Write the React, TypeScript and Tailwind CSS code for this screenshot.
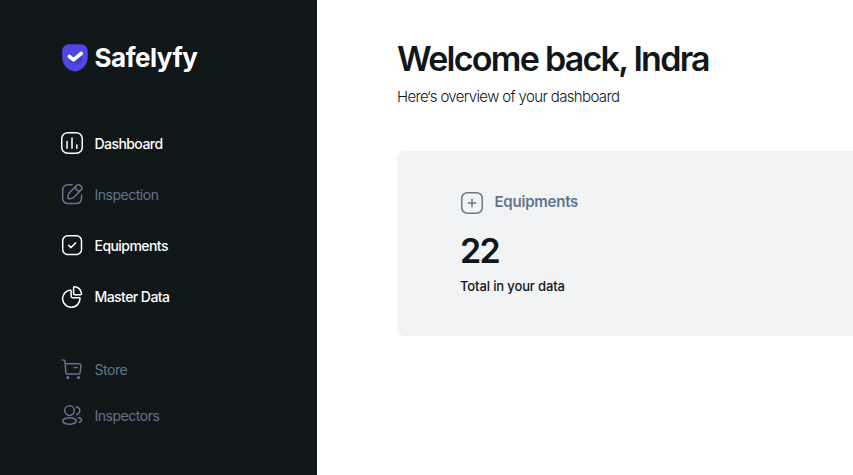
import type { ReactNode } from "react";

function Icon({ children, width = 1.5 }: { children: ReactNode; width?: number }) {
  return (
    <svg width="24" height="24" viewBox="0 0 24 24" fill="none" stroke="currentColor" strokeWidth={width} strokeLinecap="round" strokeLinejoin="round" className="shrink-0">
      {children}
    </svg>
  );
}

const icons = {
  dashboard: (
    <Icon>
      <rect x="1.75" y="1.75" width="20.5" height="20.5" rx="5.8" />
      <path d="M7 10.5v6.7M12 7v10.2M16.8 14v3.2" />
    </Icon>
  ),
  edit: (
    <Icon>
      <path d="M12 2.7H8.5c-4.2 0-5.8 1.7-5.8 5.8v7.2c0 4.1 1.7 5.8 5.8 5.8h7.2c4.1 0 5.8-1.7 5.8-5.8V13" />
      <path d="m16.2 3.9-7.3 7.3c-.3.3-.5.8-.6 1.2l-.4 2.8c-.1 1 .5 1.6 1.5 1.5l2.8-.4c.4-.1.9-.3 1.2-.6l7.3-7.3c1.3-1.3 1.8-2.7 0-4.5s-3.2-1.3-4.5 0ZM15.1 5c.6 2.2 2.3 3.9 4.5 4.5" />
    </Icon>
  ),
  check: (
    <Icon>
      <rect x="2.7" y="2.7" width="18.8" height="18.8" rx="5" />
      <path d="m8.6 12.3 2.4 2.3 4.6-4.7" />
    </Icon>
  ),
  pie: (
    <Icon>
      <path d="M21.5 9.2c-.6-3.3-3.2-5.9-6.5-6.5-.9-.2-1.4.3-1.4 1.1v5.6c0 .8.5 1.3 1.3 1.3h5.4c.8 0 1.3-.6 1.2-1.5Z" />
      <path d="M20 14.6a8.7 8.7 0 1 1-9.9-8.6c.6-.1 1 .3 1 1v5.3c0 .8.6 1.4 1.4 1.4h6.9c.5 0 .7.3.6.9Z" />
    </Icon>
  ),
  cart: (
    <Icon>
      <path d="M2.5 3h1c.8 0 1.4.6 1.5 1.4l.8 10.7c.1 1.2 1 2 2.1 2h10.3c1.1 0 1.9-.8 2-1.9l.7-6.5c.1-1.1-.7-2-1.8-2H5.2M14.2 10.6h3" />
      <circle cx="7.8" cy="20.6" r=".8" fill="currentColor" />
      <circle cx="18.5" cy="20.6" r=".8" fill="currentColor" />
    </Icon>
  ),
  users: (
    <Icon>
      <circle cx="9.5" cy="7.6" r="4.8" />
      <ellipse cx="9.5" cy="18" rx="6.8" ry="3.2" />
      <path d="M16.2 3.7c4.7.8 4.7 6.8.3 7.7M18.3 14.8c4 .2 4.2 3.8.8 4.4" />
    </Icon>
  ),
};

function NavItem({ icon, label, muted = false }: { icon: ReactNode; label: string; muted?: boolean }) {
  return (
    <a className={muted ? "flex h-6 items-center gap-[10.5px] tracking-[-0.03em] text-[#64748b]" : "flex h-6 items-center gap-[10.5px] font-medium tracking-[-0.035em] text-white"}>
      {icon}
      <span className="relative top-px text-[14px] leading-6 whitespace-nowrap">{label}</span>
    </a>
  );
}

export default function App() {
  return (
    <div className="flex h-[475px] w-full overflow-hidden bg-white font-['Inter',sans-serif] text-[#101719]">
      <aside className="w-[317px] shrink-0 bg-[#101719] pl-[60px] pt-[42px]">
        <div className="flex h-8 items-center text-white">
          <svg width="30" height="32" viewBox="0 0 30 32" fill="none">
            <defs>
              <linearGradient id="shadow" x1="15" y1="17" x2="15" y2="26" gradientUnits="userSpaceOnUse">
                <stop stopColor="#4036bd" />
                <stop offset="1" stopColor="#4f46e5" />
              </linearGradient>
            </defs>
            <path d="M10 2.2h10c5 0 7.8 2.6 7.8 7.4v4.2c0 4.6-1 8-3.3 10.8-2.6 3.2-5.9 4.8-9.5 4.8s-6.9-1.6-9.5-4.8C3.2 21.8 2.2 18.4 2.2 13.8V9.6c0-4.8 2.8-7.4 7.8-7.4Z" fill="#4f46e5" />
            <path d="m9 16 5 3.5 8-7v5.5c-1 5-12 8-13-2Z" fill="url(#shadow)" />
            <path d="m9.4 14.5 4.1 3.4 7.7-6.4" stroke="white" strokeWidth="3.6" strokeLinecap="round" strokeLinejoin="round" />
          </svg>
          <span className="ml-[4.5px] text-[26px] leading-8 font-bold tracking-[-0.018em]">Safelyfy</span>
        </div>
        <nav className="mt-[57px]">
          <div className="flex flex-col gap-[27px]">
            <NavItem icon={icons.dashboard} label="Dashboard" />
            <NavItem icon={icons.edit} label="Inspection" muted />
            <NavItem icon={icons.check} label="Equipments" />
            <NavItem icon={icons.pie} label="Master Data" />
          </div>
          <div className="mt-[49px] flex flex-col gap-[22px]">
            <NavItem icon={icons.cart} label="Store" muted />
            <NavItem icon={icons.users} label="Inspectors" muted />
          </div>
        </nav>
      </aside>
      <main className="flex-1 pl-20 pt-[37px]">
        <h1 className="text-[34px] leading-[44px] font-semibold tracking-[-0.051em] whitespace-nowrap">Welcome back, Indra</h1>
        <p className="mt-1 text-[15px] leading-6 font-light tracking-[-0.043em]">Here‘s overview of your dashboard</p>
        <section className="mt-[42px] h-[185px] rounded-l-lg bg-[#f1f3f5] pl-[63px] pt-10">
          <div className="flex h-6 items-center gap-[10.5px] text-[#64748b]">
            <span className="text-[#707784]">
              <Icon>
                <rect x="1.75" y="1.75" width="20.5" height="20.5" rx="5.5" />
                <path d="M8.3 12h7.4M12 8.3v7.4" />
              </Icon>
            </span>
            <h2 className="relative -top-px text-[15px] leading-6 font-semibold tracking-[-0.015em]">Equipments</h2>
          </div>
          <p className="mt-[14px] text-[34px] leading-[44px] font-semibold tracking-[-0.051em]">22</p>
          <p className="mt-[3px] text-[13px] leading-5 font-medium tracking-[-0.01em]">Total in your data</p>
        </section>
      </main>
    </div>
  );
}
